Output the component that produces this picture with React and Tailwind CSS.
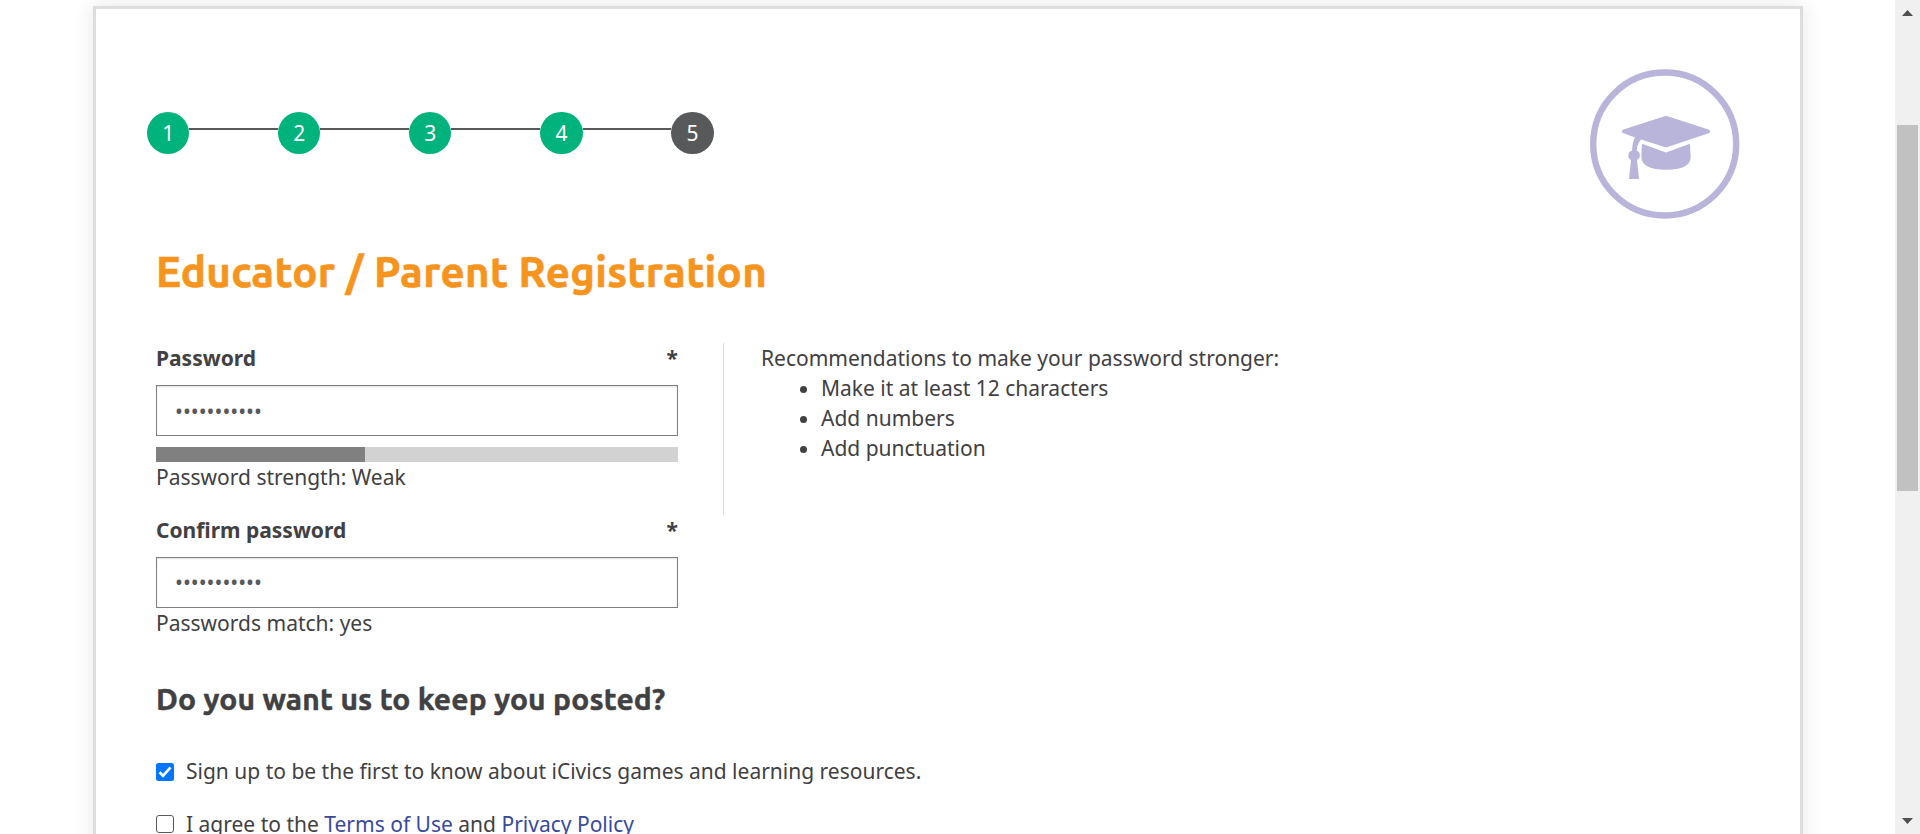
import React from "react";

const steps = [1, 2, 3, 4, 5];
const tips = ["Make it at least 12 characters", "Add numbers", "Add punctuation"];

function Stepper() {
  return (
    <ol className="mt-[103px] -ml-[9px] flex h-[42px] items-start text-[21px] text-white">
      {steps.map((n) => (
        <li key={n} className="flex items-start">
          {n > 1 && <span className="mt-4 h-[2px] w-[88.8px] bg-[#58595b]" />}
          <span
            className={
              n === 5
                ? "flex h-[42px] w-[42.3px] items-center justify-center rounded-full bg-[#58595b]"
                : "flex h-[42px] w-[42.3px] items-center justify-center rounded-full bg-[#00b27c]"
            }
          >
            {n}
          </span>
        </li>
      ))}
    </ol>
  );
}

function CapBadge() {
  return (
    <svg className="mt-[60px] mr-[60px] h-[150px] w-[150px] shrink-0" viewBox="0 0 150 150" fill="#b9b4da">
      <circle cx="74.700" cy="75" r="71.500" fill="none" stroke="#b9b4da" strokeWidth="6.400" />
      <path d="M74.500 47.300Q76 46.500 77.500 47.300L118.500 60.500Q122 62.500 118.500 64.300L77.500 78Q76 78.700 74.500 78L51 70.600Q47.200 75 46.600 81.500A5.200 5.200 0 0 1 47 91L49 110H39L41 91A5.200 5.200 0 0 1 42 81.500Q42.500 73 45 68.600L33.500 64.300Q30 62.500 33.500 60.500Z" />
      <path d="M52 74.700L76 83.400L100 74.700L100.700 88Q100.500 100.700 76 100.700Q52 100.700 51.300 88Z" />
    </svg>
  );
}

function Field({ label, dots }) {
  return (
    <>
      <label className="flex h-[30px] items-center justify-between font-bold">
        <span>{label}</span>
        <span>*</span>
      </label>
      <div className="mt-3 flex h-[51px] items-center border border-[#7f7f7f] bg-white pl-[18px] text-[21px] text-[#58595b] shadow-[inset_0_1px_2px_rgba(0,0,0,0.12)]">
        <span className={dots}>•••••••••••</span>
      </div>
    </>
  );
}

export default function App() {
  return (
    <div className="flex h-[834px] w-[1920px] overflow-hidden bg-white font-['Noto_Sans',sans-serif] text-[21px] leading-[30px] text-[#414042]">
      <main className="flex h-full w-[1895px] shrink-0 overflow-hidden pt-[6px] pl-[93px]">
        <section className="h-[1000px] w-[1710px] shrink-0 border-[3px] border-[#dcdddd] bg-white shadow-[0_0_20px_rgba(0,0,0,0.1)]">
          <header className="flex h-[233px] justify-between pl-[60px]">
            <Stepper />
            <CapBadge />
          </header>
          <div className="pl-[60px]">
            <h1 className="h-[60px] whitespace-nowrap font-['Ubuntu','Noto_Sans',sans-serif] text-[42px] leading-[60px] font-bold tracking-[0.32px] text-[#f7941d] [-webkit-text-stroke:0.6px_#f7941d]">
              Educator / Parent Registration
            </h1>
            <div className="mt-[41px] flex">
              <div className="w-[522px]">
                <Field label="Password" dots="pt-0" />
                <div className="mt-[11px] h-[15px] bg-[#d2d2d2]">
                  <div className="h-full w-[209px] bg-[#808080]" />
                </div>
                <div className="h-[30px]">Password strength: Weak</div>
              </div>
              <div className="ml-[45px] h-[172px] border-l border-[#dcdddd] pl-[37px]">
                <p>Recommendations to make your password stronger:</p>
                <ul className="list-disc pl-[60px]">
                  {tips.map((t) => (
                    <li key={t}>{t}</li>
                  ))}
                </ul>
              </div>
            </div>
            <div className="w-[522px]">
              <Field label="Confirm password" dots="pb-[2px]" />
              <div className="h-[30px]">Passwords match: yes</div>
            </div>
            <h2 className="mt-[41px] h-[40px] whitespace-nowrap font-['Ubuntu','Noto_Sans',sans-serif] text-[30px] leading-[40px] font-bold tracking-[0.16px] [-webkit-text-stroke:0.5px_#414042]">
              Do you want us to keep you posted?
            </h2>
            <label className="mt-[37px] flex h-[30px] items-center gap-[12px]">
              <svg className="mt-px size-[18px]" viewBox="0 0 18 18">
                <rect width="18" height="18" rx="2.500" fill="#0075ff" />
                <path d="M3.500 9.300L7 12.800L14.500 4.300" fill="none" stroke="#fff" strokeWidth="2.700" />
              </svg>
              <span>Sign up to be the first to know about iCivics games and learning resources.</span>
            </label>
            <label className="mt-[23px] flex h-[30px] items-center gap-[12px]">
              <span className="size-[18px] rounded-[3px] border-[1.5px] border-[#58595b] bg-white" />
              <span>
                I agree to the <a className="text-[#384a9c]">Terms of Use</a> and{" "}
                <a className="text-[#384a9c]">Privacy Policy</a>
              </span>
            </label>
          </div>
        </section>
      </main>
      <aside className="flex h-full w-[25px] flex-col items-center bg-[#f0f0f0]">
        <svg className="mt-[10px] h-[6px] w-[11px]" viewBox="0 0 11 6" fill="#505050">
          <path d="M5.500 0L11 6H0Z" />
        </svg>
        <div className="mt-[109px] h-[366px] w-[21px] bg-[#c1c1c1]" />
        <svg className="mt-auto mb-[10px] h-[6px] w-[11px]" viewBox="0 0 11 6" fill="#505050">
          <path d="M0 0H11L5.500 6Z" />
        </svg>
      </aside>
    </div>
  );
}
